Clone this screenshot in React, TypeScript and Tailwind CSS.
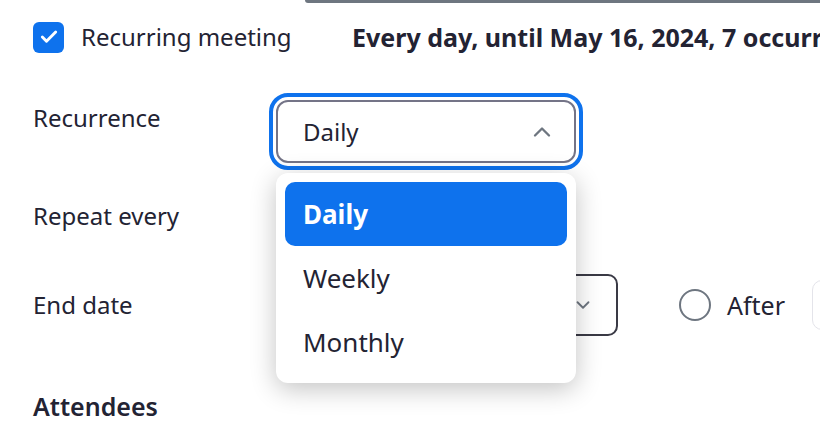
import { Check, ChevronDown, ChevronUp } from "lucide-react";

const font = "font-['Noto_Sans','Open_Sans',sans-serif]";

export default function App() {
  return (
    <div className={`relative h-[422px] w-[820px] overflow-hidden bg-white text-[#232333] ${font}`}>
      {/* bottom edge of the field above */}
      <div className="ml-[305px] h-[3px] rounded-bl-[10px] border-b-[3px] border-l-[2px] border-[#6e7680]" />

      {/* recurring checkbox */}
      <div className="mt-[18px] flex h-[32px] items-center pl-[33px]">
        <div className="flex size-[31px] shrink-0 items-center justify-center rounded-[6px] bg-[#0e72ed]">
          <Check className="size-[20px] text-white" strokeWidth={3.5} />
        </div>
        <span className="ml-[17px] w-[271px] shrink-0 text-[24px] leading-none">Recurring meeting</span>
        <span className="whitespace-nowrap text-[25px] font-bold leading-none">
          Every day, until May 16, 2024, 7 occurrences
        </span>
      </div>

      {/* recurrence */}
      <div className="mt-[47px] flex pl-[33px]">
        <div className="w-[243px] shrink-0 pt-[6px] text-[24px] leading-none">Recurrence</div>
        <div className="relative">
          <div className="flex h-[63px] w-[300px] items-center justify-between rounded-[12px] border-2 border-[#747487] pl-[25px] pr-[18px] outline-4 outline-offset-[3px] outline-[#0e72ed]">
            <span className="text-[24px]">Daily</span>
            <ChevronUp className="size-[28px] text-[#6e7680]" strokeWidth={2} />
          </div>
          <div className="absolute left-0 top-[73px] z-10 w-[300px] rounded-[12px] bg-white p-[9px] shadow-[0_6px_26px_rgba(0,0,0,0.24)]">
            <div className="flex h-[64px] items-center rounded-[10px] bg-[#0e72ed] pl-[18px] text-[26px] font-bold text-white">
              Daily
            </div>
            <div className="flex h-[64px] items-center pl-[18px] text-[26px]">Weekly</div>
            <div className="flex h-[64px] items-center pl-[18px] text-[26px]">Monthly</div>
          </div>
        </div>
      </div>

      {/* repeat every */}
      <div className="mt-[41px] flex pl-[33px]">
        <div className="w-[243px] shrink-0 text-[24px] leading-none">Repeat every</div>
      </div>

      {/* end date */}
      <div className="mt-[46px] flex items-center pl-[33px]">
        <div className="w-[243px] shrink-0 text-[24px] leading-none">End date</div>
        <div className="flex h-[62px] w-[342px] shrink-0 items-center justify-end rounded-[10px] border-2 border-[#3a3a45] pr-[22px]">
          <ChevronDown className="size-[22px] text-[#6e7680]" strokeWidth={2} />
        </div>
        <div className="ml-[61px] size-[32px] shrink-0 rounded-full border-2 border-[#6e7680]" />
        <span className="ml-[16px] shrink-0 text-[25px] leading-none">After</span>
        <div className="ml-[27px] h-[50px] w-[60px] shrink-0 rounded-[10px] border border-[#e4e4ea]" />
      </div>

      {/* attendees */}
      <div className="mt-[58px] pl-[33px] text-[25px] font-semibold leading-none">Attendees</div>
    </div>
  );
}
